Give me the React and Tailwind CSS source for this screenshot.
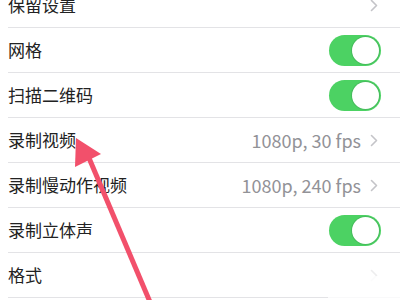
import React from "react";

const Toggle = () => (
  <div className="w-[52px] h-[31px] rounded-full bg-[#4cd263] p-[2px] flex justify-end">
    <div className="w-[27px] h-[27px] rounded-full bg-white shadow-[0_0_0_1px_rgba(60,150,80,0.35)]" />
  </div>
);

const Chevron = ({ faint }) => (
  <svg width="8" height="13" viewBox="0 0 8 13" className={faint ? "opacity-30" : ""}>
    <path d="M1.5 1.5 L6.5 6.5 L1.5 11.5" fill="none" stroke="#c4c4c8" strokeWidth="1.6" strokeLinecap="round" strokeLinejoin="round" />
  </svg>
);

const Row = ({ label, value, toggle, faint }) => (
  <div className="h-[45px] ml-2 border-b border-[#e3e3e6] flex items-center justify-between">
    <span className="text-[17px] text-[#222]">{label}</span>
    {toggle ? (
      <div className="pr-[19px]">
        <Toggle />
      </div>
    ) : (
      <div className="flex items-center gap-[9px] pr-[22px]">
        {value && <span className="text-[18px] text-[#929297]">{value}</span>}
        <Chevron faint={faint} />
      </div>
    )}
  </div>
);

export default function App() {
  return (
    <div
      className="relative w-[400px] h-[300px] overflow-hidden bg-white"
      style={{ fontFamily: '"Noto Sans CJK SC", "Noto Sans", sans-serif' }}
    >
      {/* Settings list */}
      <div className="-mt-[17px]">
        <Row label="保留设置" />
        <Row label="网格" toggle />
        <Row label="扫描二维码" toggle />
        <Row label="录制视频" value="1080p, 30 fps" />
        <Row label="录制慢动作视频" value="1080p, 240 fps" />
        <Row label="录制立体声" toggle />
        <Row label="格式" faint />
      </div>

      {/* watermark patch */}
      <div className="absolute right-0 bottom-0 w-[72px] h-[24px] bg-white/80" />

      {/* red arrow */}
      <svg className="absolute inset-0" width="400" height="300" viewBox="0 0 400 300">
        <line x1="89" y1="158" x2="150" y2="302" stroke="#f2506b" strokeWidth="5" />
        <polygon points="76,138 75,167 101,154" fill="#f2506b" />
      </svg>
    </div>
  );
}
